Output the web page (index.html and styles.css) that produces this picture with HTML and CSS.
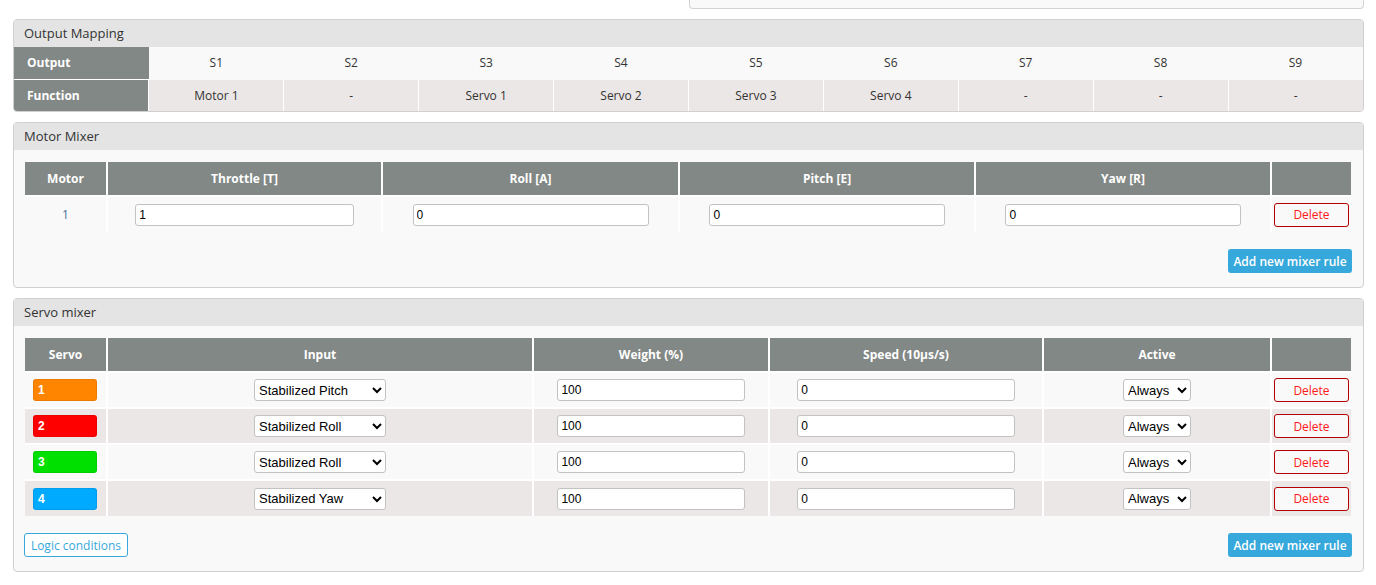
FILE: index.html
```html
<!DOCTYPE html>
<html>
<head>
<meta charset="utf-8">
<link rel="stylesheet" href="styles.css">
</head>
<body>
<div class="page">
  <div class="top-row"><div class="top-box"></div></div>

  <div class="gui-box">
    <div class="gui-head">Output Mapping</div>
    <table class="out-map">
      <tr class="out-row">
        <th>Output</th><td>S1</td><td>S2</td><td>S3</td><td>S4</td><td>S5</td><td>S6</td><td>S7</td><td>S8</td><td>S9</td>
      </tr>
      <tr class="fn-row">
        <th>Function</th><td>Motor 1</td><td>-</td><td>Servo 1</td><td>Servo 2</td><td>Servo 3</td><td>Servo 4</td><td>-</td><td>-</td><td>-</td>
      </tr>
    </table>
  </div>

  <div class="gui-box">
    <div class="gui-head">Motor Mixer</div>
    <div class="gui-body">
      <table class="mix motor-mix">
        <colgroup>
          <col class="c-num"><col class="c-thr"><col class="c-roll"><col class="c-pitch"><col class="c-yaw"><col class="c-del">
        </colgroup>
        <thead>
          <tr><th>Motor</th><th>Throttle [T]</th><th>Roll [A]</th><th>Pitch [E]</th><th>Yaw [R]</th><th></th></tr>
        </thead>
        <tbody>
          <tr>
            <td class="motor-num">1</td>
            <td><input class="num-in" type="text" value="1"></td>
            <td><input class="num-in" type="text" value="0"></td>
            <td><input class="num-in" type="text" value="0"></td>
            <td><input class="num-in" type="text" value="0"></td>
            <td><button class="btn-del">Delete</button></td>
          </tr>
        </tbody>
      </table>
      <div class="actions actions-end">
        <button class="btn-add">Add new mixer rule</button>
      </div>
    </div>
  </div>

  <div class="gui-box">
    <div class="gui-head">Servo mixer</div>
    <div class="gui-body">
      <table class="mix servo-mix">
        <colgroup>
          <col class="s-num"><col class="s-input"><col class="s-weight"><col class="s-speed"><col class="s-active"><col class="s-del">
        </colgroup>
        <thead>
          <tr><th>Servo</th><th>Input</th><th>Weight (%)</th><th>Speed (10µs/s)</th><th>Active</th><th></th></tr>
        </thead>
        <tbody>
          <tr>
            <td class="servo-cell"><div class="servo-tag tag-orange">1</div></td>
            <td><select class="sel-input"><option>Stabilized Pitch</option></select></td>
            <td><input class="num-in" type="text" value="100"></td>
            <td><input class="num-in" type="text" value="0"></td>
            <td><select class="sel-active"><option>Always</option></select></td>
            <td><button class="btn-del">Delete</button></td>
          </tr>
          <tr>
            <td class="servo-cell"><div class="servo-tag tag-red">2</div></td>
            <td><select class="sel-input"><option>Stabilized Roll</option></select></td>
            <td><input class="num-in" type="text" value="100"></td>
            <td><input class="num-in" type="text" value="0"></td>
            <td><select class="sel-active"><option>Always</option></select></td>
            <td><button class="btn-del">Delete</button></td>
          </tr>
          <tr>
            <td class="servo-cell"><div class="servo-tag tag-green">3</div></td>
            <td><select class="sel-input"><option>Stabilized Roll</option></select></td>
            <td><input class="num-in" type="text" value="100"></td>
            <td><input class="num-in" type="text" value="0"></td>
            <td><select class="sel-active"><option>Always</option></select></td>
            <td><button class="btn-del">Delete</button></td>
          </tr>
          <tr>
            <td class="servo-cell"><div class="servo-tag tag-blue">4</div></td>
            <td><select class="sel-input"><option>Stabilized Yaw</option></select></td>
            <td><input class="num-in" type="text" value="100"></td>
            <td><input class="num-in" type="text" value="0"></td>
            <td><select class="sel-active"><option>Always</option></select></td>
            <td><button class="btn-del">Delete</button></td>
          </tr>
        </tbody>
      </table>
      <div class="actions actions-between">
        <button class="btn-logic">Logic conditions</button>
        <button class="btn-add">Add new mixer rule</button>
      </div>
    </div>
  </div>
</div>
</body>
</html>
```

FILE: styles.css
```css
* { box-sizing: border-box; }
html, body { margin: 0; padding: 0; background: #fff; }
body {
  font-family: "Open Sans", "Liberation Sans", sans-serif;
  font-size: 12px;
  color: #333;
}
.page {
  width: 1376px;
  padding: 0 12px 0 13px;
}
.top-row {
  display: flex;
  justify-content: flex-end;
}
.top-box {
  width: 675px;
  height: 9px;
  background: #f9f9f9;
  border: 1px solid #d3d3d3;
  border-top: 0;
  border-radius: 0 0 4px 4px;
}
.gui-box {
  margin-top: 10px;
  background: #f9f9f9;
  border: 1px solid #d0d0d0;
  border-radius: 4px;
  overflow: hidden;
}
.gui-head {
  height: 27px;
  line-height: 27px;
  padding-left: 10px;
  background: #e4e4e4;
  font-size: 13px;
  color: #333;
}
/* Output mapping */
.out-map {
  width: 100%;
  table-layout: fixed;
  border-collapse: collapse;
}
.out-map th, .out-map td {
  height: 32px;
  padding: 0;
  text-align: center;
  font-weight: 400;
}
.out-map th {
  background: #828885;
  color: #fff;
  font-weight: 700;
  text-align: left;
  padding-left: 13px;
}
.out-row td { background: #f9f9f9; }
.fn-row th { border-top: 1px solid #fff; }
.fn-row td {
  background: #ebe7e6;
  border-top: 1px solid #f9f9f9;
  border-left: 1px solid #fff;
}
/* Mixer tables */
.gui-body {
  padding: 12px 12px 14px 11px;
}
.mix {
  width: 1326px;
  table-layout: fixed;
  border-collapse: collapse;
}
.mix th {
  height: 34px;
  background: #828885;
  color: #fff;
  font-weight: 700;
  padding: 0;
  text-align: center;
  border-left: 2px solid #fff;
}
.mix td {
  height: 36px;
  padding: 0;
  text-align: center;
  border-top: 2px solid #fff;
  border-left: 2px solid #fff;
}
.mix th:first-child, .mix td:first-child { border-left: 0; }
.servo-mix tbody tr:nth-child(even) td { background: #ebe7e6; }
.c-num { width: 82px; }
.c-thr { width: 275px; }
.c-roll { width: 297px; }
.c-pitch { width: 296px; }
.c-yaw { width: 296px; }
.c-del { width: 80px; }
.s-num { width: 82px; }
.s-input { width: 426px; }
.s-weight { width: 236px; }
.s-speed { width: 274px; }
.s-active { width: 228px; }
.s-del { width: 80px; }
.motor-num { color: #48719a; }
.num-in {
  width: 80%;
  height: 22px;
  border: 1px solid #c2c2c2;
  border-radius: 3px;
  background: #fff;
  font-family: "Liberation Sans", Arial, sans-serif;
  font-size: 12px;
  color: #000;
  padding: 0 3px;
  vertical-align: middle;
}
select {
  height: 22px;
  border: 1px solid #c2c2c2;
  border-radius: 3px;
  background: #fff;
  font-family: "Liberation Sans", Arial, sans-serif;
  font-size: 13px;
  color: #000;
  vertical-align: middle;
}
.sel-input { width: 132px; }
.sel-active { width: 68px; }
.servo-cell { text-align: left !important; }
.servo-tag {
  width: 64px;
  height: 22px;
  margin-left: 8px;
  border-radius: 3px;
  border: 1px solid rgba(0,0,0,0.08);
  color: #fff;
  font-family: "Liberation Sans", Arial, sans-serif;
  font-weight: 700;
  font-size: 12px;
  line-height: 20px;
  padding-left: 4px;
}
.tag-orange { background: #ff8500; }
.tag-red { background: #ff0000; }
.tag-green { background: #00e000; }
.tag-blue { background: #00aaff; }
.btn-del {
  width: 75px;
  height: 24px;
  border: 1px solid #b30000;
  border-radius: 3px;
  background: #f9f9f9;
  color: #ff1a1a;
  font-family: "Open Sans", sans-serif;
  font-size: 12px;
  padding: 0;
  vertical-align: middle;
}
.actions {
  display: flex;
  margin: 17px -1px 0 -1px;
}
.actions-end { justify-content: flex-end; }
.actions-between { justify-content: space-between; }
.btn-add {
  height: 24px;
  width: 124px;
  border: 0;
  border-radius: 3px;
  background: #37a8db;
  color: #fff;
  font-family: "Open Sans", sans-serif;
  font-size: 12px;
  font-weight: 600;
  padding: 0;
}
.btn-logic {
  height: 24px;
  width: 104px;
  border: 1px solid #37a8db;
  border-radius: 3px;
  background: #fff;
  color: #37a8db;
  font-family: "Open Sans", sans-serif;
  font-size: 12px;
  font-weight: 500;
  padding: 0;
}
```
